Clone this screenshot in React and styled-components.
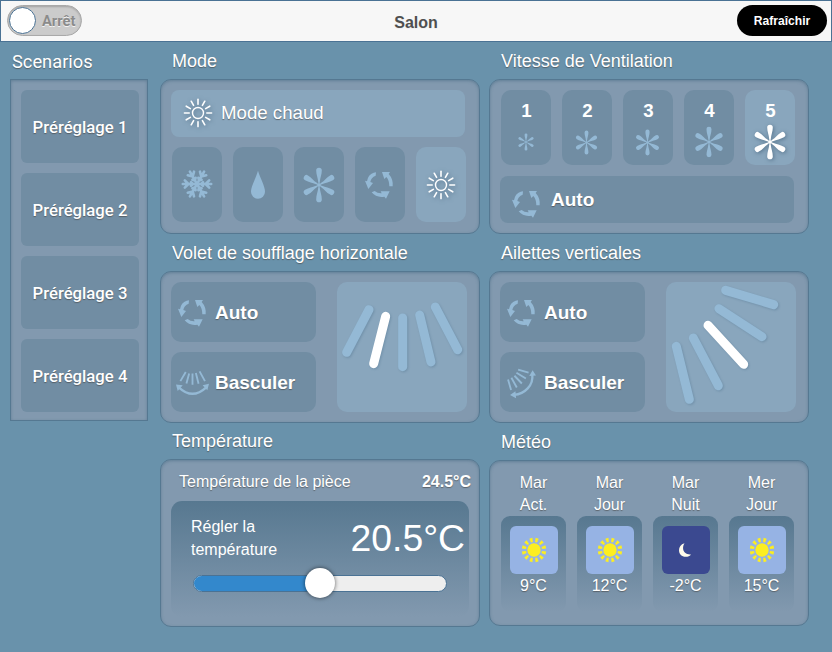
import React from "react";
import styled, { createGlobalStyle, css } from "styled-components";

const GlobalStyle = createGlobalStyle`
  *, *::before, *::after { box-sizing: border-box; }
  body {
    margin: 0;
    background: #6992ab;
    color: #fff;
    font-family: "Liberation Sans", Arial, sans-serif;
  }
`;

const textShadow = "0 1px 1px rgba(70, 70, 70, 0.65)";

const Page = styled.div`
  width: 832px;
  height: 652px;
  overflow: hidden;
  background: #6992ab;
`;

const Header = styled.header`
  display: grid;
  grid-template-columns: 1fr auto 1fr;
  align-items: center;
  height: 42px;
  padding: 0 4px 1px 6px;
  background: #f7f7f7;
  border: 1px solid #4a7294;
`;

const Title = styled.h1`
  margin: 4px 2px 0 0;
  font-size: 16px;
  font-weight: 700;
  color: #4f4f4f;
  text-shadow: 0 1px 0 #eee;
`;

const Toggle = styled.div`
  display: flex;
  align-items: center;
  gap: 6px;
  width: 75px;
  height: 31px;
  padding: 1px;
  border: 1px solid #a9a9a9;
  border-radius: 16px;
  background: #cbcbcb;
  box-shadow: inset 0 1px 2px rgba(0, 0, 0, 0.2);
  font: 700 14.7px Roboto, sans-serif;
  color: #8b8b8b;
  text-shadow: 0 1px 0 #f3f3f3;
`;

const Knob = styled.span`
  width: 27px;
  height: 27px;
  flex: none;
  border: 1px solid #4a7294;
  border-radius: 50%;
  background: #fff;
`;

const RefreshButton = styled.button`
  justify-self: end;
  width: 90px;
  height: 31px;
  padding: 1px 0 0;
  border: 0;
  border-radius: 16px;
  background: #000;
  color: #fff;
  font: 700 12.1px "Liberation Sans", Arial, sans-serif;
`;

const Main = styled.main`
  display: flex;
  padding-left: 10px;
`;

const Column = styled.div`
  width: ${(p) => p.$width}px;
  margin-right: ${(p) => p.$gap || 0}px;
`;

const Heading = styled.h2`
  height: ${(p) => p.$height || 37}px;
  margin: 0;
  padding: ${(p) => (p.$roboto ? "9px 0 0 2px" : p.$height ? "7px 0 0 12px" : "8px 0 0 12px")};
  font: 400 ${(p) => (p.$roboto ? '18.3px/22px Roboto' : '18px/22px "Liberation Sans"')}, sans-serif;
  text-shadow: ${textShadow};
`;

const Panel = styled.section`
  height: ${(p) => p.$height}px;
  padding: 10px;
  border: 1px solid #557891;
  border-radius: ${(p) => (p.$square ? 0 : 11)}px;
  background: #8299af;
  box-shadow: inset 0 1px 3px rgba(70, 105, 130, 0.55);
`;

const PresetList = styled(Panel)`
  display: flex;
  flex-direction: column;
  gap: 10px;
`;

const surface = css`
  background: ${(p) => (p.$active ? "#89a6bd" : "#718da3")};
  color: ${(p) => (p.$active ? "#fff" : "#94b9d5")};
`;

const Preset = styled.button`
  width: 118px;
  height: 73px;
  flex: none;
  padding: 1px 0 0;
  border: 0;
  border-radius: 6px;
  background: #718da3;
  color: #fff;
  font: 500 16.7px Roboto, sans-serif;
  text-shadow: ${textShadow};
`;

const WideBar = styled.div`
  ${surface}
  display: flex;
  align-items: center;
  width: 294px;
  height: 47px;
  padding-left: ${(p) => (p.$active ? 12 : 10)}px;
  gap: 8px;
  border-radius: 8px;
  padding-bottom: ${(p) => (p.$active ? 2 : 0)}px;
`;

const Label = styled.span`
  color: #fff;
  font-size: ${(p) => (p.$bold ? 19 : 18.67)}px;
  font-weight: ${(p) => (p.$bold ? 700 : 400)};
  text-shadow: ${textShadow};
`;

const TileRow = styled.div`
  display: flex;
  gap: 11px;
  margin: ${(p) => p.$margin};
`;

const Tile = styled.button`
  ${surface}
  display: flex;
  flex-direction: column;
  align-items: center;
  justify-content: center;
  width: 50px;
  height: 75px;
  padding: 0 1px 0 0;
  border: 0;
  border-radius: 10px;
`;

const SpeedTile = styled(Tile)`
  justify-content: flex-start;
  padding-top: 10px;
`;

const SpeedNumber = styled.span`
  height: 23px;
  padding-left: 2px;
  color: #fff;
  font: 700 18.67px/22px "Liberation Sans", Arial, sans-serif;
`;

const SpeedIcon = styled.span`
  display: flex;
  align-items: center;
  justify-content: center;
  width: 40px;
  height: 38px;
`;

const Icon = styled.svg`
  display: block;
  flex: none;
  overflow: visible;
  width: ${(p) => p.$size}px;
  height: ${(p) => p.$size}px;
  filter: ${(p) => (p.$shadow ? "drop-shadow(1px 1px 2px rgba(50, 80, 105, 0.6))" : "none")};
`;

const AirflowPanel = styled(Panel)`
  display: grid;
  grid-template-columns: 145px 130px;
  grid-template-rows: 60px 60px;
  column-gap: 21px;
  row-gap: 10px;
`;

const AirflowButton = styled.button`
  ${surface}
  display: flex;
  align-items: center;
  gap: 6px;
  padding: 2px 0 0 5px;
  border: 0;
  border-radius: 10px;
  font-family: inherit;
`;

const IconSlot = styled.span`
  display: grid;
  place-items: center;
  width: 33px;
  height: 33px;
  padding-top: ${(p) => p.$drop || 0}px;
`;

const BladeBox = styled.div`
  grid-column: 2;
  grid-row: 1 / 3;
  border-radius: 10px;
  background: #89a6bd;
`;

const BladeDrawing = styled.svg`
  display: block;
  width: 130px;
  height: 130px;
  fill: none;
  stroke: #94b9d5;
  stroke-width: 27;
  stroke-linecap: round;
  filter: drop-shadow(1px 1px 1px rgba(70, 105, 135, 0.35));
`;

const RoomRow = styled.div`
  display: flex;
  justify-content: space-between;
  height: 31px;
  padding: 0 0 0 8px;
  margin-right: -2px;
  font-size: 16px;
  line-height: 23px;
  text-shadow: ${textShadow};
`;

const SetBox = styled.div`
  width: 298px;
  height: 116px;
  padding: 14px 4px 0 20px;
  border-radius: 11px;
  background: linear-gradient(#577890, #8299af);
`;

const SetRow = styled.div`
  display: flex;
  justify-content: space-between;
  height: 53px;
  font-size: 16px;
  line-height: 23px;
`;

const BigTemperature = styled.strong`
  font-size: 37.3px;
  font-weight: 400;
  line-height: 46px;
`;

const SliderTrack = styled.div`
  display: flex;
  align-items: center;
  width: 254px;
  height: 17px;
  margin: 7px 0 0 2px;
  border: 1px solid #4a7294;
  border-radius: 9px;
  background: #eee;
`;

const SliderFill = styled.div`
  width: 126px;
  height: 15px;
  border-radius: 8px 0 0 8px;
  background: #38c;
`;

const SliderHandle = styled.div`
  flex: none;
  width: 30px;
  height: 30px;
  margin: -1px 0 0 -15px;
  border-radius: 50%;
  background: #fff;
  box-shadow: 0 0 4px rgba(0, 0, 0, 0.6);
`;

const WeatherPanel = styled(Panel)`
  display: flex;
  gap: 11px;
  padding-left: 11px;
`;

const Forecast = styled.div`
  width: 65px;
  padding-top: 1px;
  text-align: center;
  font-size: 16px;
  line-height: 22px;
  text-shadow: ${textShadow};
`;

const ForecastCard = styled.div`
  display: flex;
  flex-direction: column;
  align-items: center;
  gap: 1px;
  height: 96px;
  padding-top: 10px;
  border-radius: 9px;
  background: linear-gradient(#577890, #8299af);
`;

const WeatherTile = styled.div`
  display: grid;
  place-items: center;
  width: 48px;
  height: 48px;
  border-radius: 6px;
  background: ${(p) => (p.$night ? "#3b4990" : "#96b3e4")};
`;

const SixWay = ({ children }) =>
  [0, 60, 120, 180, 240, 300].map((a) => (
    <g key={a} transform={`rotate(${a})`}>{children}</g>
  ));

const twelve = Array.from({ length: 12 }, (_, i) => i * 30);

const SunIcon = () => (
  <Icon viewBox="-15 -15 30 30" $size={30} $shadow fill="none" stroke="currentColor">
    <circle r="5.5" strokeWidth="1.4" />
    {twelve.map((a) => (
      <path key={a} d="M0-8.8V-13.6" strokeWidth="1.6" strokeLinecap="round" transform={`rotate(${a})`} />
    ))}
  </Icon>
);

const SnowIcon = () => (
  <Icon viewBox="-16 -16 32 32" $size={32} fill="none" stroke="currentColor" strokeWidth="2.6" strokeLinecap="round">
    <g transform="translate(0 -1) rotate(30)">
      <SixWay>
        <path d="M0 0V-14.2M0-8.6L-3.6-12.2M0-8.6L3.6-12.2M0-4.2L-1.9-6M0-4.2L1.9-6" />
      </SixWay>
    </g>
  </Icon>
);

const DropIcon = () => (
  <Icon viewBox="-15 -15 30 30" $size={30} fill="currentColor">
    <path d="M0-14.3C2-7 7 1 7 6.8A7 7 0 0 1-7 6.8C-7 1-2-7 0-14.3Z" />
  </Icon>
);

const FanIcon = ({ size = 36, active }) => (
  <Icon viewBox="-18 -18 36 36" $size={size} $shadow={active} fill="currentColor">
    <circle r="1.8" />
    <SixWay>
      <path d="M0 0L-.8-3C-1.1-7-2.8-10-2.8-14.4A2.8 2.8 0 0 1 2.8-14.4C2.8-10 1.1-7 .8-3Z" />
    </SixWay>
  </Icon>
);

const CycleIcon = () => (
  <Icon viewBox="-42 -45 90 90" $size={30} fill="currentColor">
    <path d="M-36-11Q-33-32-16-37L-9-38L-10-28Q-24-23-26-9L-18-6L-32 12L-42-13Z" />
    <path d="M9-39L33-39L29-33Q43-18 41 4L31 4Q31-14 22-24L16-18Z" />
    <path d="M-22 22L-13 18Q-4 26 8 25L5 19L32 19L21 41L16 35Q-8 39-22 22Z" />
  </Icon>
);

const SwingHorizontalIcon = () => (
  <Icon viewBox="-49 -49 98 98" $size={33} fill="none" stroke="currentColor" strokeWidth="5.5">
    <path d="M-20-34L-36-7M-10-30L-18 0M0-30V4M10-31L18 1M21-36L37-7" />
    <path d="M-40 12Q0 49 40 12" strokeWidth="7" />
    <path d="M-49 3L-29 5L-44 22ZM49 1L30 5L44 20Z" fill="currentColor" stroke="none" />
  </Icon>
);

const SwingVerticalIcon = () => (
  <Icon viewBox="-49 -49 98 98" $size={33} fill="none" stroke="currentColor" strokeWidth="5.5">
    <path d="M-10-41L21-32M-15-32L13-15M-21-23L1 0M-30-17L-14 12M-40-12L-31 19" />
    <path d="M32-26C36 5 10 31-22 34" strokeWidth="7" />
    <path d="M23-22L43-24L33-39ZM-18 23L-34 34L-16 44Z" fill="currentColor" stroke="none" />
  </Icon>
);

const WeatherSun = () => (
  <Icon viewBox="-12 -12 24 24" $size={24} fill="#fcee21">
    <circle r="6.7" />
    {twelve.map((a) => (
      <path key={a} d="M-1-8L-1.6-12.2L1.6-12.2L1-8Z" transform={`rotate(${a + 15})`} />
    ))}
  </Icon>
);

const WeatherMoon = () => (
  <Icon viewBox="-12 -12 24 24" $size={24} fill="#fffbea">
    <path d="M-1.5-6.8C-5.2-5.8-7-3-7 .2C-7 4-4.2 6.8-.4 6.8C2 6.8 4 5.8 5 4.4C.5 4.8-2.6 2.5-2.9-1.2C-3.1-3.5-2.5-5.4-1.5-6.8Z" />
  </Icon>
);

const horizontalBlades = [
  "M96 83L29 211",
  "M146 103L110 245",
  "M197 108V254",
  "M248 99L282 240",
  "M295 75L362 203",
];
const verticalBlades = [
  "M179 25L323 68",
  "M159 80L288 164",
  "M126 130L233 247",
  "M82 168L157 311",
  "M31 193L70 352",
];

const Blades = ({ paths, active }) => (
  <BladeBox>
    <BladeDrawing viewBox="0 0 390 390">
      {paths.map((d, i) => (
        <path key={d} d={d} stroke={i === active ? "#fff" : undefined} />
      ))}
    </BladeDrawing>
  </BladeBox>
);

const Airflow = ({ swing, paths, active }) => (
  <AirflowPanel $height={152}>
    <AirflowButton>
      <IconSlot><CycleIcon /></IconSlot>
      <Label $bold>Auto</Label>
    </AirflowButton>
    <AirflowButton>
      {swing}
      <Label $bold>Basculer</Label>
    </AirflowButton>
    <Blades paths={paths} active={active} />
  </AirflowPanel>
);

const forecasts = [
  { day: "Mar", part: "Act.", temp: "9°C" },
  { day: "Mar", part: "Jour", temp: "12°C" },
  { day: "Mar", part: "Nuit", temp: "-2°C", night: true },
  { day: "Mer", part: "Jour", temp: "15°C" },
];

const speeds = [18, 25, 27, 32, 36];

export default function App() {
  return (
    <Page>
      <GlobalStyle />
      <Header>
        <Toggle><Knob />Arrêt</Toggle>
        <Title>Salon</Title>
        <RefreshButton>Rafraîchir</RefreshButton>
      </Header>
      <Main>
        <Column $width={138} $gap={12}>
          <Heading $roboto>Scenarios</Heading>
          <PresetList $height={342} $square>
            {[1, 2, 3, 4].map((n) => <Preset key={n}>Préréglage {n}</Preset>)}
          </PresetList>
        </Column>

        <Column $width={320} $gap={9}>
          <Heading>Mode</Heading>
          <Panel $height={155}>
            <WideBar $active><SunIcon /><Label>Mode chaud</Label></WideBar>
            <TileRow $margin="10px 0 0 1px">
              <Tile><SnowIcon /></Tile>
              <Tile><DropIcon /></Tile>
              <Tile><FanIcon /></Tile>
              <Tile><CycleIcon /></Tile>
              <Tile $active><SunIcon /></Tile>
            </TileRow>
          </Panel>
          <Heading>Volet de soufflage horizontale</Heading>
          <Airflow swing={<SwingHorizontalIcon />} paths={horizontalBlades} active={1} />
          <Heading $height={36}>Température</Heading>
          <Panel $height={168}>
            <RoomRow><span>Température de la pièce</span><b>24.5°C</b></RoomRow>
            <SetBox>
              <SetRow>
                <span>Régler la<br />température</span>
                <BigTemperature>20.5°C</BigTemperature>
              </SetRow>
              <SliderTrack><SliderFill /><SliderHandle /></SliderTrack>
            </SetBox>
          </Panel>
        </Column>

        <Column $width={320}>
          <Heading>Vitesse de Ventilation</Heading>
          <Panel $height={155}>
            <TileRow $margin="0 0 11px 1px">
              {speeds.map((size, i) => (
                <SpeedTile key={size} $active={i === 4}>
                  <SpeedNumber>{i + 1}</SpeedNumber>
                  <SpeedIcon><FanIcon size={size} active={i === 4} /></SpeedIcon>
                </SpeedTile>
              ))}
            </TileRow>
            <WideBar><IconSlot $drop={6}><CycleIcon /></IconSlot><Label $bold>Auto</Label></WideBar>
          </Panel>
          <Heading>Ailettes verticales</Heading>
          <Airflow swing={<SwingVerticalIcon />} paths={verticalBlades} active={2} />
          <Heading>Météo</Heading>
          <WeatherPanel $height={166}>
            {forecasts.map((f, i) => (
              <Forecast key={i}>
                {f.day}<br />{f.part}
                <ForecastCard>
                  <WeatherTile $night={f.night}>{f.night ? <WeatherMoon /> : <WeatherSun />}</WeatherTile>
                  {f.temp}
                </ForecastCard>
              </Forecast>
            ))}
          </WeatherPanel>
        </Column>
      </Main>
    </Page>
  );
}
